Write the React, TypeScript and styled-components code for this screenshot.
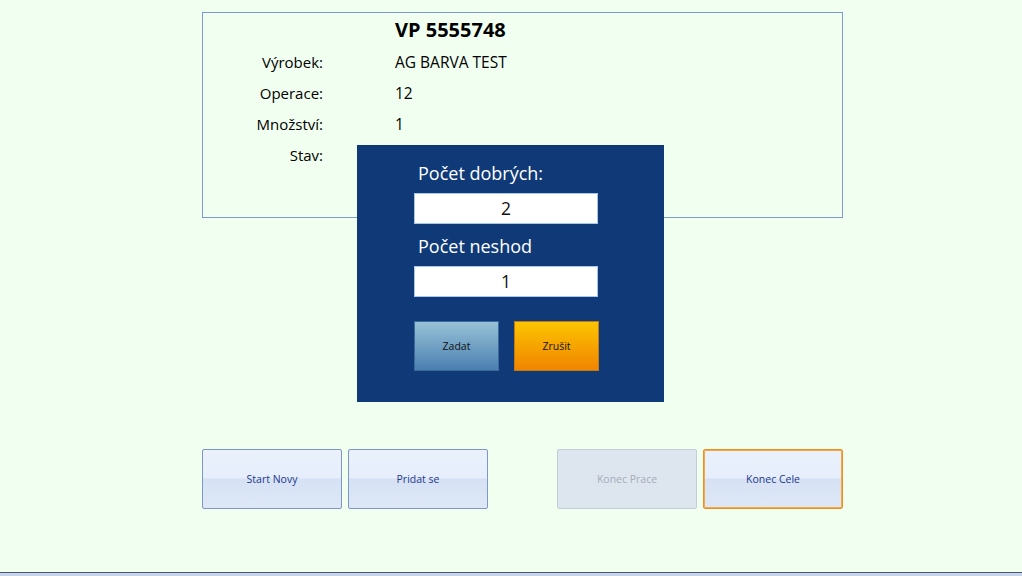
import React from "react";
import styled, { createGlobalStyle, css } from "styled-components";

const Global = createGlobalStyle`
  html, body { margin: 0; padding: 0; height: 100%; }
  body { background: #f0fff0; font-family: "Open Sans", "Noto Sans", sans-serif; color: #000; }
  #root { height: 100%; }
`;

const Page = styled.div`
  position: relative;
  height: 100vh;
  display: flex;
  flex-direction: column;
  box-sizing: border-box;
`;

const Card = styled.section`
  margin: 12px 0 0 202px;
  width: 641px;
  height: 206px;
  box-sizing: border-box;
  border: 1px solid #7d9bd0;
  padding-top: 4px;
  display: grid;
  grid-template-columns: 120px 1fr;
  column-gap: 72px;
  grid-template-rows: 30px;
  grid-auto-rows: 31px;
  align-content: start;
`;

const Title = styled.div`
  grid-column: 2;
  align-self: start;
  font-weight: 700;
  font-size: 20px;
  line-height: 26px;
`;

const Label = styled.div`
  grid-column: 1;
  text-align: right;
  font-size: 15px;
  line-height: 31px;
`;

const Value = styled.div`
  grid-column: 2;
  font-size: 15.5px;
  line-height: 31px;
`;

const ButtonRow = styled.div`
  margin: 231px 0 0 202px;
  width: 641px;
  display: flex;
  gap: 6px;
`;

const Spacer = styled.div`
  width: 57px;
  flex-shrink: 0;
`;

const ActionButton = styled.button<{ $disabled?: boolean; $focused?: boolean }>`
  width: 140px;
  height: 60px;
  flex-shrink: 0;
  box-sizing: border-box;
  border: 1px solid #7f97c2;
  border-radius: 2px;
  font-family: "Open Sans", "Noto Sans", sans-serif;
  font-size: 10.5px;
  color: #23378c;
  background: linear-gradient(to bottom, #eaf1fd 0%, #e6eefb 48%, #d6e2f4 50%, #dde7f7 100%);
  padding: 0;
  ${(p) =>
    p.$disabled &&
    css`
      background: #dde5ef;
      border-color: #c3ccd8;
      color: #a5adb9;
    `}
  ${(p) =>
    p.$focused &&
    css`
      border-color: #f0901c;
      box-shadow: inset 0 0 0 1px #f4a848;
    `}
`;

const Footer = styled.div`
  margin-top: auto;
  height: 3px;
  border-top: 1px solid #4c5a6e;
  background: #c7d3ea;
`;

const Dialog = styled.div`
  position: absolute;
  left: 357px;
  top: 145px;
  width: 307px;
  height: 257px;
  box-sizing: border-box;
  background: #0f3a77;
  padding: 15px 0 0 57px;
  display: flex;
  flex-direction: column;
  align-items: flex-start;
`;

const DialogLabel = styled.div<{ $gap?: number }>`
  color: #fff;
  font-size: 18px;
  line-height: 26px;
  padding-left: 4px;
  margin-top: ${(p) => p.$gap ?? 0}px;
`;

const NumberBox = styled.div`
  margin-top: 7px;
  width: 184px;
  height: 31px;
  box-sizing: border-box;
  background: #fff;
  border: 1px solid #a9c6ee;
  font-size: 17.5px;
  line-height: 29px;
  text-align: center;
  color: #111;
`;

const DialogButtons = styled.div`
  margin-top: 24px;
  display: flex;
  gap: 15px;
`;

const DialogButton = styled.button<{ $tone: "blue" | "orange" }>`
  width: 85px;
  height: 50px;
  box-sizing: border-box;
  padding: 0;
  font-family: "Open Sans", "Noto Sans", sans-serif;
  font-size: 10.5px;
  color: #111;
  ${(p) =>
    p.$tone === "blue"
      ? css`
          border: 1px solid #3d6a9c;
          background: linear-gradient(to bottom, #97c2d6, #4b7fb1);
        `
      : css`
          border: 1px solid #c47a10;
          background: linear-gradient(to bottom, #fcc500, #f08400);
        `}
`;

const rows = [
  { label: "Výrobek:", value: "AG BARVA TEST" },
  { label: "Operace:", value: "12" },
  { label: "Množství:", value: "1" },
  { label: "Stav:", value: "" },
];

export default function App() {
  return (
    <>
      <Global />
      <Page>
        <Card>
          <Title>VP 5555748</Title>
          {rows.map((r) => (
            <React.Fragment key={r.label}>
              <Label>{r.label}</Label>
              <Value>{r.value}</Value>
            </React.Fragment>
          ))}
        </Card>
        <ButtonRow>
          <ActionButton>Start Novy</ActionButton>
          <ActionButton>Pridat se</ActionButton>
          <Spacer />
          <ActionButton $disabled>Konec Prace</ActionButton>
          <ActionButton $focused>Konec Cele</ActionButton>
        </ButtonRow>
        <Footer />
        <Dialog>
          <DialogLabel>Počet dobrých:</DialogLabel>
          <NumberBox>2</NumberBox>
          <DialogLabel $gap={9}>Počet neshod</DialogLabel>
          <NumberBox>1</NumberBox>
          <DialogButtons>
            <DialogButton $tone="blue">Zadat</DialogButton>
            <DialogButton $tone="orange">Zrušit</DialogButton>
          </DialogButtons>
        </Dialog>
      </Page>
    </>
  );
}
